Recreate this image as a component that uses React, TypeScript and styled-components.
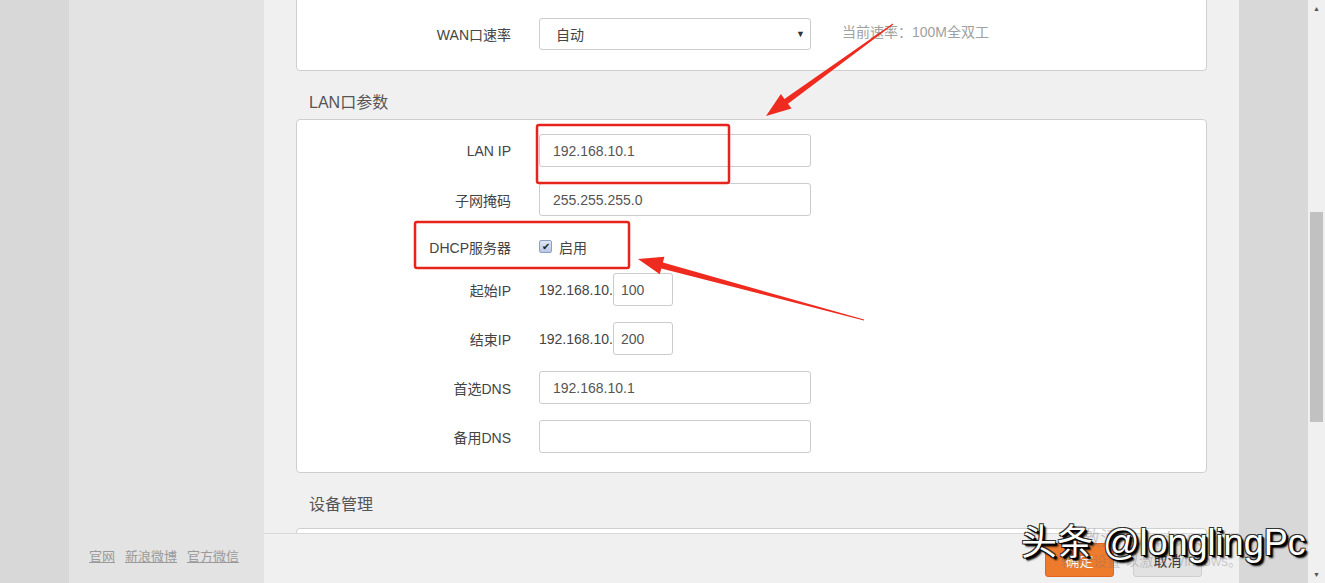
import React from "react";
import styled, { createGlobalStyle } from "styled-components";

const Global = createGlobalStyle`
  html, body { margin: 0; padding: 0; overflow: hidden; }
  body {
    font-family: "Liberation Sans", Arial, "Noto Sans CJK SC", sans-serif;
    background: #f0f0f0;
  }
  * { box-sizing: border-box; }
`;

const Page = styled.div`
  position: relative;
  display: flex;
  width: 1325px;
  height: 583px;
  overflow: hidden;
`;

const Strip = styled.div<{ $w: number }>`
  width: ${(p) => p.$w}px;
  flex: none;
  background: #d8d8d8;
`;

const Sidebar = styled.aside`
  width: 195px;
  flex: none;
  background: #e3e3e3;
  display: flex;
  flex-direction: column;
  justify-content: flex-end;
  padding: 0 0 17px 20px;
`;

const FooterLinks = styled.div`
  display: flex;
  gap: 10px;
`;

const FooterLink = styled.a`
  font-size: 13px;
  color: #9a9a9a;
  text-decoration: underline;
  line-height: 18px;
`;

const Main = styled.main`
  position: relative;
  width: 975px;
  flex: none;
  background: #f0f0f0;
  overflow: hidden;
`;

const Content = styled.div`
  display: flex;
  flex-direction: column;
  padding: 0 32px;
`;

const Card = styled.section<{ $top?: number; $pt: number; $pb: number }>`
  margin-top: ${(p) => p.$top ?? 0}px;
  background: #fff;
  border: 1px solid #cfcfcf;
  border-radius: 4px;
  padding: ${(p) => p.$pt}px 0 ${(p) => p.$pb}px;
  display: flex;
  flex-direction: column;
  gap: 16px;
`;

const SectionTitle = styled.h3<{ $after?: number }>`
  margin: 0;
  padding: 21px 0 ${(p) => 5 + (p.$after ?? 0)}px 13px;
  font-size: 16px;
  line-height: 22px;
  font-weight: normal;
  color: #555;
`;

const Row = styled.div<{ $h?: number; $offset?: number }>`
  display: grid;
  grid-template-columns: 214px auto 1fr;
  column-gap: 28px;
  align-items: center;
  height: ${(p) => p.$h ?? 33}px;
  padding-top: ${(p) => p.$offset ?? 0}px;
`;

const Label = styled.label`
  text-align: right;
  font-size: 14px;
  color: #444;
  white-space: nowrap;
`;

const Field = styled.div`
  display: flex;
  align-items: center;
`;

const TextInput = styled.div<{ $w: number }>`
  width: ${(p) => p.$w}px;
  height: 33px;
  border: 1px solid #cccccc;
  border-radius: 3px;
  background: #fff;
  display: flex;
  align-items: center;
  padding-left: 13px;
  font-size: 14px;
  color: #555;
`;

const Small = styled(TextInput)`
  padding-left: 7px;
`;

const Prefix = styled.span`
  font-size: 14px;
  color: #444;
  width: 74px;
`;

const Select = styled.div`
  width: 272px;
  height: 32px;
  border: 1px solid #cccccc;
  border-radius: 3px;
  display: flex;
  align-items: center;
  justify-content: space-between;
  padding: 0 5px 0 16px;
  font-size: 14px;
  color: #444;
`;

const Caret = styled.span`
  font-size: 9px;
  color: #333;
`;

const Help = styled.span`
  font-size: 14px;
  color: #a0a0a0;
  margin-left: 3px;
  margin-top: -6px;
`;

const CheckWrap = styled.div`
  display: flex;
  align-items: center;
  gap: 7px;
  font-size: 14px;
  color: #444;
`;

const CheckBox = styled.span`
  width: 13px;
  height: 13px;
  border: 1px solid #8e9fc2;
  border-radius: 2px;
  background: linear-gradient(#dfe6f4, #b9c8e6);
  display: flex;
  align-items: center;
  justify-content: center;
  font-size: 10px;
  line-height: 1;
  color: #222;
`;

const BottomBar = styled.div`
  position: absolute;
  left: 0;
  right: 0;
  bottom: 0;
  height: 50px;
  border-top: 1px solid #d8d8d8;
  background: #f0f0f0;
  display: flex;
  justify-content: flex-end;
  align-items: flex-start;
  gap: 19px;
  padding: 9px 37px 0 0;
`;

const Button = styled.button<{ $primary?: boolean }>`
  width: 69px;
  height: 34px;
  border-radius: 3px;
  font-family: inherit;
  font-size: 14px;
  border: 1px solid ${(p) => (p.$primary ? "#e0661e" : "#cfcfcf")};
  background: ${(p) => (p.$primary ? "#ee7a2c" : "#e2e2e2")};
  color: ${(p) => (p.$primary ? "#fff" : "#333")};
`;

const ScrollTrack = styled.div`
  width: 17px;
  flex: none;
  background: #f0f0f0;
  display: flex;
  flex-direction: column;
  align-items: center;
`;

const ScrollArrow = styled.div`
  height: 17px;
  width: 17px;
  display: flex;
  align-items: center;
  justify-content: center;
  font-size: 7px;
  color: #555;
`;

const ScrollThumb = styled.div`
  width: 13px;
  height: 210px;
  margin-top: 195px;
  background: #c1c1c1;
`;

const Spacer = styled.div`
  flex: 1;
`;

const Overlay = styled.svg`
  position: absolute;
  left: 0;
  top: 0;
  pointer-events: none;
`;

const Activation = styled.div`
  position: absolute;
  left: 1060px;
  top: 527px;
  color: rgba(120, 120, 120, 0.35);
  font-size: 14px;
  line-height: 20px;
  pointer-events: none;
`;

const ActivationTitle = styled.div`
  font-size: 20px;
  line-height: 24px;
  padding-left: 20px;
`;

const Watermark = styled.div`
  position: absolute;
  left: 1021px;
  top: 521px;
  font-size: 36px;
  line-height: 44px;
  color: #fff;
  white-space: nowrap;
  text-shadow: 1px 1px 0 #000, 2px 2px 0 #000, 3px 3px 2px #000, -1px -1px 0 #333, 1px -1px 0 #333, -1px 1px 0 #333;
  pointer-events: none;
`;

export default function App() {
  return (
    <>
      <Global />
      <Page>
        <Strip $w={69} />
        <Sidebar>
          <FooterLinks>
            <FooterLink>官网</FooterLink>
            <FooterLink>新浪微博</FooterLink>
            <FooterLink>官方微信</FooterLink>
          </FooterLinks>
        </Sidebar>
        <Main>
          <Content>
            <Card $top={-20} $pt={37} $pb={20}>
              <Row $h={32}>
                <Label>WAN口速率</Label>
                <Select>
                  <span>自动</span>
                  <Caret>▼</Caret>
                </Select>
                <Help>当前速率：100M全双工</Help>
              </Row>
            </Card>
            <SectionTitle>LAN口参数</SectionTitle>
            <Card $pt={14} $pb={19}>
              <Row>
                <Label>LAN IP</Label>
                <TextInput $w={272}>192.168.10.1</TextInput>
              </Row>
              <Row>
                <Label>子网掩码</Label>
                <TextInput $w={272}>255.255.255.0</TextInput>
              </Row>
              <Row $h={25} $offset={4}>
                <Label>DHCP服务器</Label>
                <CheckWrap>
                  <CheckBox>✔</CheckBox>
                  启用
                </CheckWrap>
              </Row>
              <Row>
                <Label>起始IP</Label>
                <Field>
                  <Prefix>192.168.10.</Prefix>
                  <Small $w={60}>100</Small>
                </Field>
              </Row>
              <Row>
                <Label>结束IP</Label>
                <Field>
                  <Prefix>192.168.10.</Prefix>
                  <Small $w={60}>200</Small>
                </Field>
              </Row>
              <Row>
                <Label>首选DNS</Label>
                <TextInput $w={272}>192.168.10.1</TextInput>
              </Row>
              <Row>
                <Label>备用DNS</Label>
                <TextInput $w={272} />
              </Row>
            </Card>
            <SectionTitle $after={7}>设备管理</SectionTitle>
            <Card $pt={40} $pb={40} />
          </Content>
          <BottomBar>
            <Button $primary>确定</Button>
            <Button>取消</Button>
          </BottomBar>
        </Main>
        <Strip $w={69} />
        <ScrollTrack>
          <ScrollArrow>▲</ScrollArrow>
          <ScrollThumb />
          <Spacer />
          <ScrollArrow>▼</ScrollArrow>
        </ScrollTrack>

        <Overlay width="1325" height="583" viewBox="0 0 1325 583">
          <rect x="537" y="125" width="192" height="58" rx="2" fill="none" stroke="#e6241c" strokeWidth="2.5" />
          <rect x="415" y="222" width="214" height="46" rx="2" fill="none" stroke="#e6241c" strokeWidth="2.5" />
          <polygon
            fill="#ef2a1f"
            points="892.7,23.6 784.4,98.9 780.9,94.1 766,116 791.5,108.6 788,103.8 893.3,24.4"
          />
          <polygon
            fill="#ef2a1f"
            points="863.9,320.5 661.3,268.4 659.8,274.2 638,259 664.4,256.8 662.9,262.6 864.1,319.5"
          />
        </Overlay>
        <Activation>
          <ActivationTitle>激活 Windows</ActivationTitle>
          <div>转到“设置”以激活 Windows。</div>
        </Activation>
        <Watermark>头条 @longlingPc</Watermark>
      </Page>
    </>
  );
}
